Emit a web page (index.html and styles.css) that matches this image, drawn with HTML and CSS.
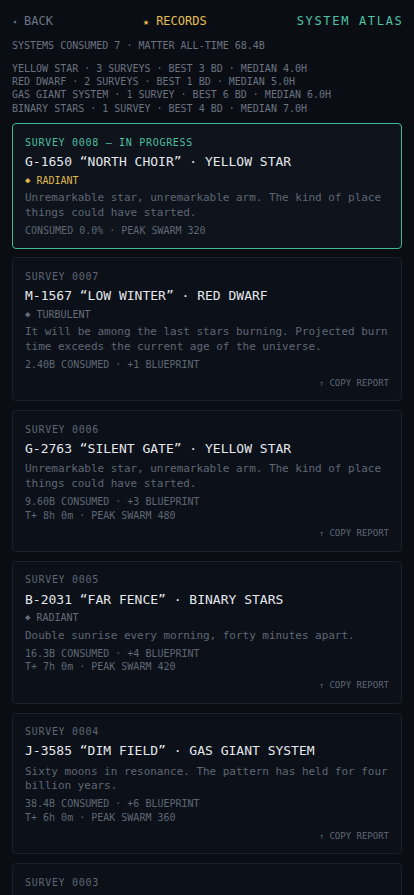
FILE: index.html
```html
<!DOCTYPE html>
<html lang="en">
<head>
<meta charset="utf-8">
<meta name="viewport" content="width=device-width, initial-scale=1">
<title>Records</title>
<link rel="stylesheet" href="styles.css">
</head>
<body>
<div class="page">
  <header class="topbar">
    <span class="back"><span class="back-arrow">◂</span> BACK</span>
    <span class="title"><span class="star">★</span> RECORDS</span>
    <span class="atlas">SYSTEM ATLAS</span>
  </header>

  <div class="summary">SYSTEMS CONSUMED 7 · MATTER ALL-TIME 68.4B</div>

  <div class="breakdown">
    <div>YELLOW STAR · 3 SURVEYS · BEST 3 BD · MEDIAN 4.0H</div>
    <div>RED DWARF · 2 SURVEYS · BEST 1 BD · MEDIAN 5.0H</div>
    <div>GAS GIANT SYSTEM · 1 SURVEY · BEST 6 BD · MEDIAN 6.0H</div>
    <div>BINARY STARS · 1 SURVEY · BEST 4 BD · MEDIAN 7.0H</div>
  </div>

  <section class="card card-active">
    <div class="label label-active">SURVEY 0008 — IN PROGRESS</div>
    <div class="name">G-1650 “NORTH CHOIR” · YELLOW STAR</div>
    <div class="tag tag-gold"><span class="dia">◆</span> RADIANT</div>
    <div class="desc">Unremarkable star, unremarkable arm. The kind of place things could have started.</div>
    <div class="stats">CONSUMED 0.0% · PEAK SWARM 320</div>
  </section>

  <section class="card">
    <div class="label">SURVEY 0007</div>
    <div class="name">M-1567 “LOW WINTER” · RED DWARF</div>
    <div class="tag"><span class="dia">◆</span> TURBULENT</div>
    <div class="desc">It will be among the last stars burning. Projected burn time exceeds the current age of the universe.</div>
    <div class="stats">2.40B CONSUMED · +1 BLUEPRINT</div>
    <div class="copy"><span class="up">↑</span> COPY REPORT</div>
  </section>

  <section class="card">
    <div class="label">SURVEY 0006</div>
    <div class="name">G-2763 “SILENT GATE” · YELLOW STAR</div>
    <div class="desc">Unremarkable star, unremarkable arm. The kind of place things could have started.</div>
    <div class="stats">9.60B CONSUMED · +3 BLUEPRINT<br>T+ 8h 0m · PEAK SWARM 480</div>
    <div class="copy"><span class="up">↑</span> COPY REPORT</div>
  </section>

  <section class="card">
    <div class="label">SURVEY 0005</div>
    <div class="name">B-2031 “FAR FENCE” · BINARY STARS</div>
    <div class="tag"><span class="dia">◆</span> RADIANT</div>
    <div class="desc">Double sunrise every morning, forty minutes apart.</div>
    <div class="stats">16.3B CONSUMED · +4 BLUEPRINT<br>T+ 7h 0m · PEAK SWARM 420</div>
    <div class="copy"><span class="up">↑</span> COPY REPORT</div>
  </section>

  <section class="card">
    <div class="label">SURVEY 0004</div>
    <div class="name">J-3585 “DIM FIELD” · GAS GIANT SYSTEM</div>
    <div class="desc">Sixty moons in resonance. The pattern has held for four billion years.</div>
    <div class="stats">38.4B CONSUMED · +6 BLUEPRINT<br>T+ 6h 0m · PEAK SWARM 360</div>
    <div class="copy"><span class="up">↑</span> COPY REPORT</div>
  </section>

  <section class="card">
    <div class="label">SURVEY 0003</div>
    <div class="name">R-0412 “PALE HARBOR” · RED DWARF</div>
    <div class="desc">A quiet star with a long memory.</div>
    <div class="stats">4.10B CONSUMED · +2 BLUEPRINT</div>
  </section>
</div>
</body>
</html>
```

FILE: styles.css
```css
html, body {
  margin: 0;
  padding: 0;
  background: #0a0d14;
}

body {
  font-family: "DejaVu Sans Mono", "Liberation Mono", monospace;
  color: #6b7380;
  font-size: 10px;
  line-height: 13.5px;
}

.page {
  padding: 13px 12px 40px;
  display: flex;
  flex-direction: column;
}

.topbar {
  display: flex;
  justify-content: space-between;
  align-items: center;
  height: 16px;
  font-size: 12px;
  line-height: 16px;
}

.back {
  color: #6b7585;
}

.back-arrow {
  font-size: 8px;
  vertical-align: 1px;
}

.title {
  color: #e3be4f;
}

.star {
  font-size: 10px;
  vertical-align: 0;
}

.atlas {
  color: #4fc3a3;
  letter-spacing: 0.14em;
  margin-right: -1.5px;
}

.summary {
  margin-top: 10.25px;
  color: #6b7380;
}

.breakdown {
  margin-top: 8.9px;
  line-height: 13.33px;
  color: #6b7380;
}

.card {
  margin-top: 8.9px;
  border: 1px solid #1a212c;
  border-radius: 4px;
  background: #0c1018;
  padding: 11.5px 12px 10.2px;
  display: flex;
  flex-direction: column;
  gap: 3.75px;
}

.breakdown + .card {
  margin-top: 8.4px;
}

.card-active {
  border-color: #3fb898;
  background: #0e131c;
}

.label {
  color: #5f6775;
  letter-spacing: 0.07em;
}

.label-active {
  color: #4cbf9f;
}

.name {
  font-size: 13px;
  line-height: 17px;
  color: #e4e7ec;
}

.name + .desc {
  margin-top: 1.5px;
}

.tag {
  color: #646c7a;
}

.tag-gold {
  color: #ddb84a;
}

.dia {
  font-size: 9px;
  vertical-align: 1px;
}

.desc {
  font-size: 11px;
  line-height: 14.5px;
  letter-spacing: -0.03px;
  color: #5f6774;
}

.stats {
  color: #5f6774;
}

.copy {
  margin-top: 1.5px;
  margin-bottom: 0.5px;
  align-self: flex-end;
  font-size: 9px;
  line-height: 12px;
  color: #5f6775;
}

.up {
  font-size: 8px;
}
```
